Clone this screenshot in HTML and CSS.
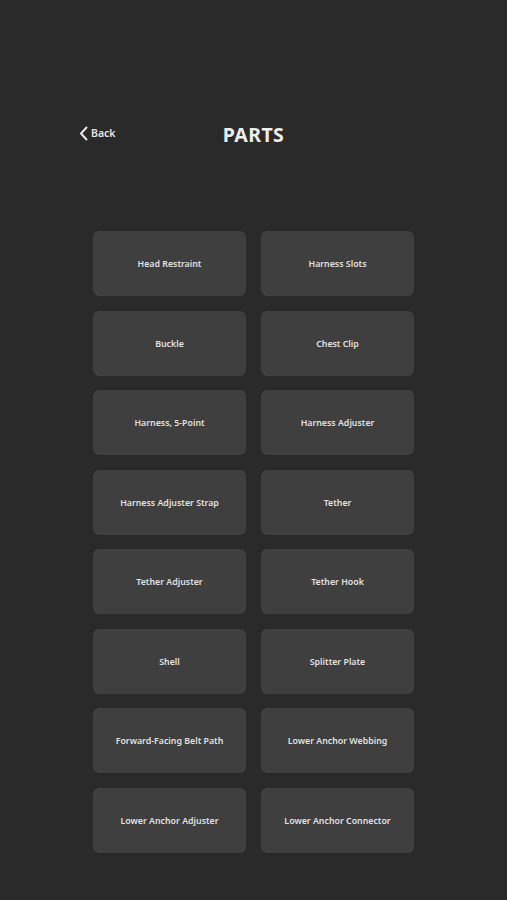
FILE: index.html
```html
<!DOCTYPE html>
<html>
<head>
<meta charset="utf-8">
<link rel="stylesheet" href="styles.css">
</head>
<body>
<div class="page">
  <header class="header">
    <div class="back">
      <svg class="chev" width="9" height="15" viewBox="0 0 9 15"><path d="M7.5 1.5 L2 7.5 L7.5 13.5" fill="none" stroke="#e6e6e6" stroke-width="2" stroke-linecap="round" stroke-linejoin="round"/></svg>
      <span>Back</span>
    </div>
    <h1 class="title">PARTS</h1>
  </header>
  <main class="grid">
    <div class="tile">Head Restraint</div>
    <div class="tile">Harness Slots</div>
    <div class="tile">Buckle</div>
    <div class="tile">Chest Clip</div>
    <div class="tile">Harness, 5-Point</div>
    <div class="tile">Harness Adjuster</div>
    <div class="tile">Harness Adjuster Strap</div>
    <div class="tile">Tether</div>
    <div class="tile">Tether Adjuster</div>
    <div class="tile">Tether Hook</div>
    <div class="tile">Shell</div>
    <div class="tile">Splitter Plate</div>
    <div class="tile">Forward-Facing Belt Path</div>
    <div class="tile">Lower Anchor Webbing</div>
    <div class="tile">Lower Anchor Adjuster</div>
    <div class="tile">Lower Anchor Connector</div>
  </main>
</div>
</body>
</html>
```
FILE: styles.css
```css
html, body {
  margin: 0;
  padding: 0;
  background: #2a2a2a;
}
body {
  font-family: "Noto Sans", "Open Sans", sans-serif;
  color: #e4e4e4;
  width: 507px;
  height: 900px;
}
.page {
  padding-top: 118px;
}
.header {
  position: relative;
  height: 32px;
  display: flex;
  align-items: center;
  justify-content: center;
}
.back {
  position: absolute;
  left: 79px;
  top: -1px;
  height: 32px;
  display: flex;
  align-items: center;
  gap: 3px;
  font-size: 10.5px;
  font-weight: 600;
}
.title {
  margin: 0;
  font-size: 19.5px;
  font-weight: 700;
  letter-spacing: 0.4px;
  color: #ededed;
}
.grid {
  margin: 81px auto 0;
  width: 321px;
  display: grid;
  grid-template-columns: 153px 153px;
  column-gap: 15px;
  row-gap: 14.5px;
}
.tile {
  box-sizing: border-box;
  height: 65px;
  padding-top: 1px;
  background: #3f3f3f;
  border-radius: 6px;
  display: flex;
  align-items: center;
  justify-content: center;
  font-size: 8.8px;
  font-weight: 600;
  color: #e0e0e0;
}
```
